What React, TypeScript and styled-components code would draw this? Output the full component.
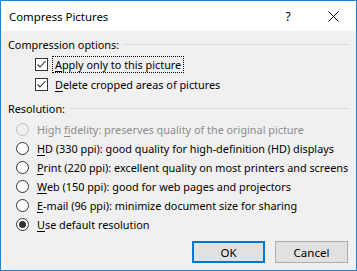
import React from "react";
import styled, { createGlobalStyle } from "styled-components";

const Global = createGlobalStyle`
  html, body { margin: 0; padding: 0; background: #ffffff; }
  * { box-sizing: border-box; }
`;

const FONT = `"Noto Sans", "Open Sans", sans-serif`;

const Window = styled.div`
  width: 357px;
  height: 271px;
  border: 1px solid #1883d7;
  display: flex;
  flex-direction: column;
  font-family: ${FONT};
  font-size: 10.85px;
  color: #000;
`;

const TitleBar = styled.div`
  height: 30px;
  background: #ffffff;
  display: flex;
  align-items: center;
  padding-left: 8px;
`;

const Title = styled.div`
  flex: 1;
  font-size: 11.4px;
  color: #000;
`;

const TitleButton = styled.div<{ $w: number }>`
  width: ${(p) => p.$w}px;
  height: 30px;
  display: flex;
  align-items: center;
  justify-content: center;
  color: #000;
  font-size: 12px;
`;

const Body = styled.div`
  flex: 1;
  background: #f0f0f0;
  display: flex;
  flex-direction: column;
  padding: 5px 7px 0 7px;
`;

const GroupHeader = styled.div<{ $mt: number }>`
  display: flex;
  align-items: center;
  height: 16px;
  margin-top: ${(p) => p.$mt}px;
  gap: 5px;
`;

const HeaderLine = styled.div`
  flex: 1;
  height: 1px;
  background: #dcdcdc;
`;

const CheckRow = styled.div<{ $mt: number }>`
  display: flex;
  align-items: center;
  height: 18px;
  margin-top: ${(p) => p.$mt}px;
  padding-left: 27px;
  gap: 4px;
`;

const Box = styled.div`
  width: 13px;
  height: 13px;
  border: 1px solid #333333;
  background: #ffffff;
  display: flex;
  align-items: center;
  justify-content: center;
`;

const Label = styled.span<{ $focus?: boolean; $disabled?: boolean }>`
  padding: 0 2px;
  border: 1px dotted ${(p) => (p.$focus ? "#000" : "transparent")};
  line-height: 15px;
  color: ${(p) => (p.$disabled ? "#8d8d8d" : "#000")};
  white-space: nowrap;
`;

const RadioRow = styled.div<{ $mt: number }>`
  display: flex;
  align-items: center;
  height: 19px;
  margin-top: ${(p) => p.$mt}px;
  padding-left: 8px;
  gap: 5px;
`;

const Circle = styled.div<{ $disabled?: boolean }>`
  width: 13px;
  height: 13px;
  border-radius: 50%;
  border: 1px solid ${(p) => (p.$disabled ? "#bcbcbc" : "#333333")};
  background: ${(p) => (p.$disabled ? "#f0f0f0" : "#ffffff")};
  display: flex;
  align-items: center;
  justify-content: center;
  flex: none;
`;

const Dot = styled.div`
  width: 7px;
  height: 7px;
  border-radius: 50%;
  background: #333333;
`;

const Buttons = styled.div`
  display: flex;
  justify-content: flex-end;
  gap: 10px;
  margin-top: 7px;
  padding-right: 1px;
`;

const Button = styled.div<{ $primary?: boolean }>`
  width: 73px;
  height: 22px;
  background: #e1e1e1;
  border: ${(p) => (p.$primary ? "2px solid #0078d7" : "1px solid #adadad")};
  display: flex;
  align-items: center;
  justify-content: center;
  font-size: 11.5px;
`;

const U = styled.span`
  text-decoration: underline;
  text-underline-offset: 2px;
`;

const Check = () => (
  <svg width="11" height="11" viewBox="0 0 11 11">
    <path d="M1.5 5.5 L4 8 L9.5 2" fill="none" stroke="#333" strokeWidth="1.1" />
  </svg>
);

const Close = () => (
  <svg width="11" height="11" viewBox="0 0 11 11">
    <path d="M0.5 0.5 L10.5 10.5 M10.5 0.5 L0.5 10.5" stroke="#000" strokeWidth="1" />
  </svg>
);

export default function App() {
  return (
    <>
      <Global />
      <Window>
        <TitleBar>
          <Title>Compress Pictures</Title>
          <TitleButton $w={44}>?</TitleButton>
          <TitleButton $w={46}>
            <Close />
          </TitleButton>
        </TitleBar>
        <Body>
          <GroupHeader $mt={0}>
            <span>Compression options:</span>
            <HeaderLine />
          </GroupHeader>
          <CheckRow $mt={3}>
            <Box>
              <Check />
            </Box>
            <Label $focus>
              <U>A</U>pply only to this picture
            </Label>
          </CheckRow>
          <CheckRow $mt={2}>
            <Box>
              <Check />
            </Box>
            <Label>
              <U>D</U>elete cropped areas of pictures
            </Label>
          </CheckRow>
          <GroupHeader $mt={7}>
            <span>Resolution:</span>
            <HeaderLine />
          </GroupHeader>
          <RadioRow $mt={4}>
            <Circle $disabled />
            <Label $disabled>
              High <U>f</U>idelity: preserves quality of the original picture
            </Label>
          </RadioRow>
          <RadioRow $mt={0}>
            <Circle />
            <Label>
              <U>H</U>D (330 ppi): good quality for high-definition (HD) displays
            </Label>
          </RadioRow>
          <RadioRow $mt={0}>
            <Circle />
            <Label>
              <U>P</U>rint (220 ppi): excellent quality on most printers and screens
            </Label>
          </RadioRow>
          <RadioRow $mt={0}>
            <Circle />
            <Label>
              <U>W</U>eb (150 ppi): good for web pages and projectors
            </Label>
          </RadioRow>
          <RadioRow $mt={0}>
            <Circle />
            <Label>
              <U>E</U>-mail (96 ppi): minimize document size for sharing
            </Label>
          </RadioRow>
          <RadioRow $mt={0}>
            <Circle>
              <Dot />
            </Circle>
            <Label>
              <U>U</U>se default resolution
            </Label>
          </RadioRow>
          <Buttons>
            <Button $primary>OK</Button>
            <Button>Cancel</Button>
          </Buttons>
        </Body>
      </Window>
    </>
  );
}
